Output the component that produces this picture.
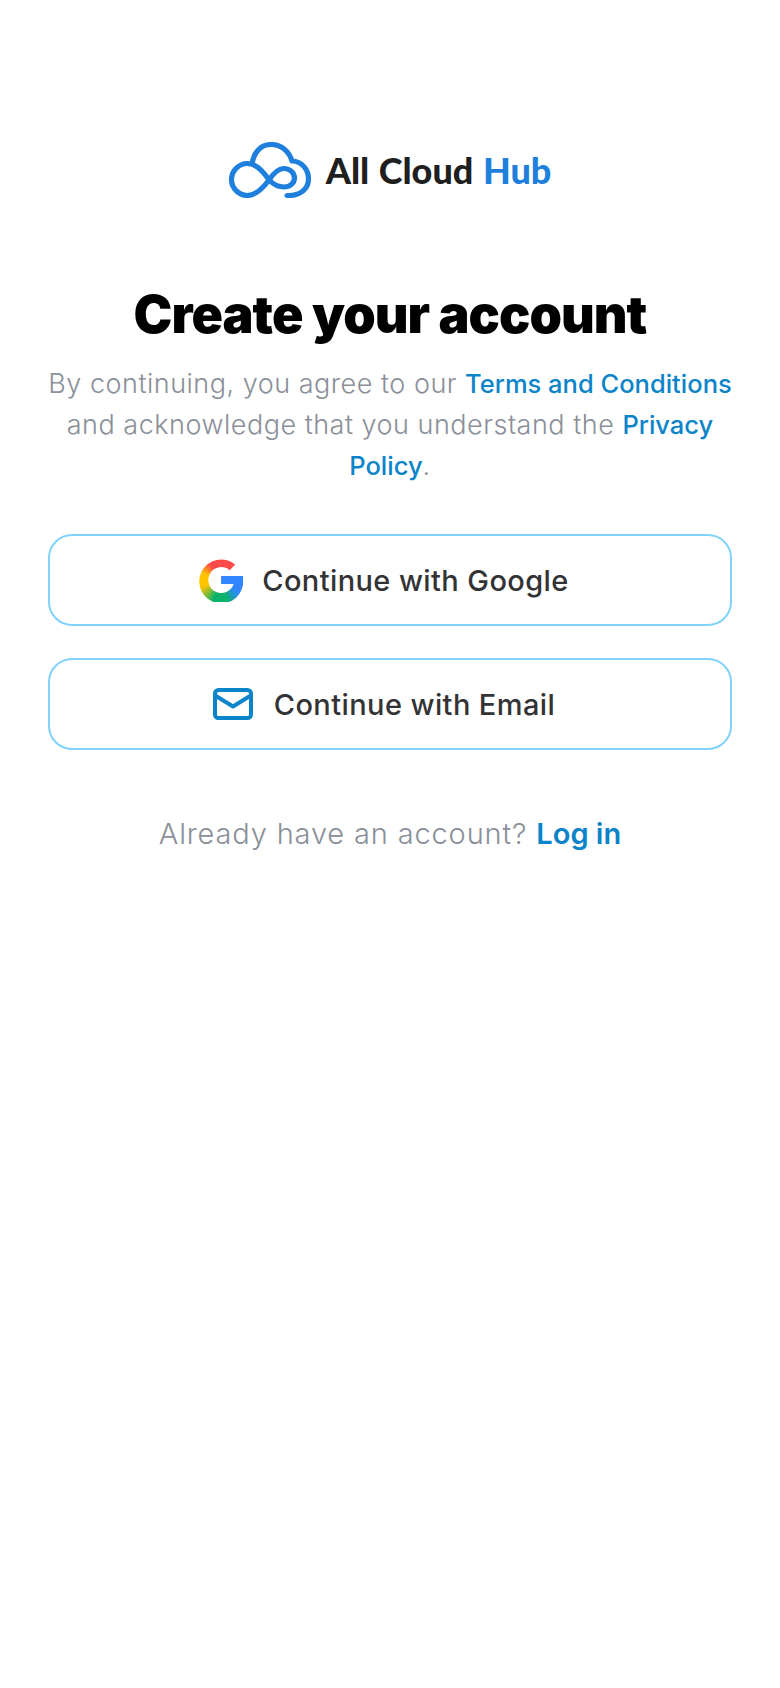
<div class="page">
  <div class="logo">
    <svg width="82" height="56" viewBox="0 0 82 56" fill="none" stroke="#1f7fdc" stroke-width="5.2" stroke-linecap="round" stroke-linejoin="round">
      <path d="M23 22C25 10 32 2.5 42 2.5C52 2.5 60 9 63 19C73 19 79.5 28 79.5 37C79.5 47 71 54 58 53.5" />
      <path d="M40 38C34 29 27 21.5 18.5 21.5C9.5 21.5 2.5 29 2.5 37.5C2.5 46 9.5 53.5 18.5 53.5C27 53.5 34 46 40 38C44 32 49 26.5 55 26.5C61 26.5 65.5 31 65.5 36C65.5 41 61 45 55 45C49 45 44 42 40 38Z" />
    </svg>
    <span class="brand">All Cloud <b>Hub</b></span>
  </div>

  <h1>Create your account</h1>
  <p class="terms">By continuing, you agree to our <a href="#t">Terms and Conditions</a> and acknowledge that you understand the <a href="#p">Privacy Policy</a>.</p>

  <div class="actions">
    <button class="btn">
      <span class="google"></span>
      <span>Continue with Google</span>
    </button>
    <button class="btn email">
      <svg width="40" height="32" viewBox="0 0 40 32" fill="none" stroke="#0b84c9" stroke-width="4" stroke-linejoin="round" stroke-linecap="round">
        <rect x="2" y="2" width="36" height="28" rx="3.5" />
        <path d="M3 8L20 18.5L37 8" />
      </svg>
      <span>Continue with Email</span>
    </button>
  </div>

  <p class="login">Already have an account? <a href="#l">Log in</a></p>
</div>

<style>
  :global(body) {
    margin: 0;
    background: #fff;
  }
  .page {
    min-height: 1688px;
    box-sizing: border-box;
    padding: 142px 48px 0;
    display: flex;
    flex-direction: column;
    align-items: center;
    font-family: Inter, "Noto Sans", sans-serif;
  }
  .logo {
    display: flex;
    align-items: center;
    gap: 15px;
    height: 56px;
  }
  .brand {
    font-family: Lato, sans-serif;
    font-weight: 900;
    font-size: 36px;
    word-spacing: 1px;
    color: #1f1f1f;
  }
  .brand b {
    font-weight: 900;
    color: #1f7fdc;
  }
  h1 {
    margin: 84px 0 0;
    font-weight: 900;
    font-size: 52px;
    line-height: 66px;
    color: #000;
    text-align: center;
    letter-spacing: -0.95px;
  }
  .terms {
    margin: 15px 0 0;
    font-size: 27px;
    line-height: 41px;
    color: #8a8f99;
    text-align: center;
    font-weight: 300;
    letter-spacing: 0.5px;
  }
  a {
    color: #0b84c9;
    text-decoration: none;
    font-weight: 500;
    font-size: 25.5px;
    letter-spacing: 0;
  }
  .actions {
    width: 100%;
    margin-top: 48px;
    display: flex;
    flex-direction: column;
    gap: 32px;
  }
  .btn {
    width: 100%;
    height: 92px;
    box-sizing: border-box;
    padding: 0 12px 0 0;
    background: #fff;
    border: 2px solid #7fd3fc;
    border-radius: 24px;
    display: flex;
    align-items: center;
    justify-content: center;
    gap: 19px;
    font: 450 29px Inter, sans-serif;
    color: #333336;
    letter-spacing: 0.4px;
  }
  .email {
    gap: 21px;
  }
  .google {
    width: 44px;
    height: 44px;
    background:
      linear-gradient(#2f86ff, #2f86ff) 22px 18px / 22px 8px no-repeat,
      conic-gradient(#ff4a4a 0deg, #ff4a4a 40deg, #2f86ff 65deg, #2f86ff 125deg, #0bb36a 165deg, #0bb36a 200deg, #ffc400 250deg, #ffc400 290deg, #ff4a4a 325deg, #ff4a4a 360deg);
    clip-path: path('M36 6.4A22 22 0 1 0 44 22C44 20.6 43.9 19.3 43.6 18L22 18V26H34.4A13 13 0 1 1 30.5 12.2Z');
  }
  .login {
    margin: 64px 0 0;
    font-size: 29px;
    line-height: 40px;
    color: #8a8f99;
    font-weight: 300;
    letter-spacing: 0.85px;
  }
  .login a {
    font-size: 29px;
    font-weight: 600;
  }
</style>
